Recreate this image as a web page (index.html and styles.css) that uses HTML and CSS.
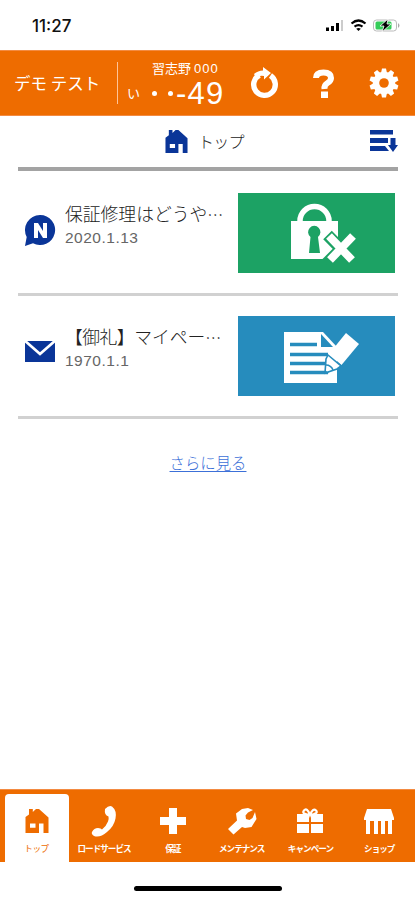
FILE: index.html
```html
<!DOCTYPE html>
<html lang="ja">
<head>
<meta charset="utf-8">
<title>トップ</title>
<link rel="stylesheet" href="styles.css">
</head>
<body>
<svg class="defs" width="0" height="0">
  <symbol id="house" viewBox="0 0 24 26"><path fill-rule="evenodd" d="M4 6.500V1h3.800v3L11 1h3l9.500 8.500V25h-5v-9.500H14V25H.5V9zM5 15.500v4.300h5.500v-4.300z"/></symbol>
</svg>
<div class="screen">
  <div class="status">
    <span class="time">11:27</span>
    <svg class="indicators" width="76" height="16" viewBox="0 0 76 16">
      <path d="M1 9.500h3V13H1zM6 8h3v5H6zM11 5h3v8h-3z"/><path fill="#ccc" d="M16 2h2v11h-2z"/>
      <g fill="none" stroke="#000" stroke-width="2.2"><path d="M26.500 5.500Q33.500-.5 40.500 5.500M29.500 8.700Q33.500 5.500 37.500 8.700"/></g><path d="M31.200 10.800Q33.500 9 35.800 10.800L33.500 13z"/>
      <rect x="48.500" y="2" width="23" height="11" rx="3" fill="#fff" stroke="#bbb"/><rect x="50.500" y="3.500" width="16" height="8" rx="1.500" fill="#35cd59"/>
      <path fill="#aaa" d="M73 5q3 2.500 0 5z"/><path stroke="#fff" stroke-width=".8" d="M63 1l-8 7h4l-2 6 9-8h-4z"/>
    </svg>
  </div>
  <header class="header">
    <span class="user">デモ テスト</span>
    <div class="plate">
      <span class="region">習志野 <span class="code">000</span></span>
      <div class="number"><span class="kana">い</span><i class="dot"></i><i class="dot"></i><span class="digits">-49</span></div>
    </div>
    <svg class="tool" width="30" height="32" viewBox="0 0 30 32"><path fill="none" stroke="#fff" stroke-width="5.400" d="M10.500 8A10.800 10.800 0 1 0 21.500 8.600"/><path fill="#fff" d="M14 0l8 6-7 6.500V9Q10 8 7 11L5 7q4-3.500 9-3.500z"/></svg>
    <svg class="tool" width="30" height="32" viewBox="0 0 30 32"><path fill="none" stroke="#fff" stroke-width="6" d="M7 11Q7 5.500 14.500 5.500T22 11Q22 14 18.500 16T15.500 22"/><path fill="#fff" d="M12 24.500h7V31h-7z"/></svg>
    <svg class="tool" width="30" height="32" viewBox="-15 -16 30 32"><g fill="#fff"><circle r="11.200"/><path id="tooth" d="M-3-10l1-4.500h4l1 4.500v20l-1 4.500h-4l-1-4.500z"/><use href="#tooth" transform="rotate(36)"/><use href="#tooth" transform="rotate(72)"/><use href="#tooth" transform="rotate(108)"/><use href="#tooth" transform="rotate(144)"/></g><circle r="4.800" fill="#ee6c00"/></svg>
  </header>
  <main class="content">
    <div class="heading">
      <svg class="home" width="23" height="25"><use href="#house"/></svg><h1>トップ</h1>
      <svg class="sort" width="28" height="22" viewBox="0 0 28 22"><path d="M0 0h23v4.500H0zM0 8h18v5H0zM0 16h15l4 5H0zM20.500 8h5v7h2.500l-5 7-5-7h2.500z"/></svg>
    </div>
    <article class="item">
      <svg class="mark" width="32" height="34" viewBox="0 0 32 34"><path d="M16 1a15 15 0 1 1-7 28.200L1 32l1.700-9A15 15 0 0 1 16 1z"/><path fill="#fff" d="M10 9h4l5 8V9h4v15h-4l-5-8v8h-4z"/></svg>
      <div class="text"><h2>保証修理はどうや<span class="more">…</span></h2><time>2020.1.13</time></div>
      <div class="thumb green"><svg width="157" height="80" viewBox="0 0 157 80">
        <path fill="none" stroke="#fff" stroke-width="5.500" d="M62 29v-1a14.500 14.500 0 0 1 29 0v1"/>
        <path fill="#fff" d="M53 28h47v38H53z"/><path fill="#1ca264" d="M72.500 44a6.200 6.200 0 1 1 7.500 0l2 16H71z"/>
        <path fill="none" stroke="#1ca264" stroke-width="12" d="M89.500 42l24.500 25M117 42L88 71"/>
        <path fill="none" stroke="#fff" stroke-width="8" d="M91 43l23 24M115 43L92 67"/>
      </svg></div>
    </article>
    <article class="item second">
      <svg class="mark" width="32" height="34" viewBox="0 0 32 34"><path d="M1 7h30v21H1z"/><path fill="none" stroke="#fff" stroke-width="2.800" d="M0 6l16 14L32 6"/></svg>
      <div class="text"><h2><span class="bracket">【御礼】</span>マイペー<span class="more">…</span></h2><time>1970.1.1</time></div>
      <div class="thumb blue"><svg width="157" height="80" viewBox="0 0 157 80">
        <path fill="#fff" d="M46 16h39l14 15v36H46z"/><path fill="none" stroke="#268cbd" stroke-width="3.600" d="M52 28.500h27M52 38.500h38M52 47.500h36M52 56.500h38"/>
        <path fill="#268cbd" d="M83 18l12 13H83z"/>
        <path fill="#fff" d="M108 17l13 11-17.500 21L91 38z"/>
        <path fill="#fff" stroke="#268cbd" stroke-width="1.600" d="M90 39l13 11-4 3-12 4 1-14z"/>
        <path fill="none" stroke="#268cbd" stroke-width="1.600" d="M88 49q5 0 7 5"/><path fill="#268cbd" d="M87 58v-4l4 3z"/>
      </svg></div>
    </article>
    <a class="load" href="#">さらに見る</a>
  </main>
  <nav class="tabs">
    <a class="tab active"><svg width="24" height="26"><use href="#house"/></svg><span>トップ</span></a>
    <a class="tab"><svg width="30" height="34" viewBox="0 0 30 34"><path d="M16 5q4-4 7-2.500 5 4 3.500 12T18 28q-7 6-13 4-3-2-2-4 2-4 6-4 3 0 4 1.500 4-3 6-8 1-3 .5-5Q15 11 16 5z"/></svg><span>ロードサービス</span></a>
    <a class="tab"><svg width="28" height="28" viewBox="0 0 28 28"><path d="M10 1h8v9h9v8h-9v9h-8v-9H1v-8h9z"/></svg><span>保証</span></a>
    <a class="tab"><svg width="30" height="28" viewBox="0 0 30 28"><path d="M9 6.500L15 2l6-1 5 2-5 2.500-2.500 3 .5 3.500 3.500 1 3-2L28 5l1.500 7-5 8-6.500 1-3-1-8.500 7.500L1 22l9-8.500z"/></svg><span>メンテナンス</span></a>
    <a class="tab"><svg width="28" height="26" viewBox="0 0 28 26"><path d="M1 6h12v8H1zM15 6h12v8H15zM1 16h12v9H1zM15 16h12v9H15z"/><path fill="none" stroke="#fff" stroke-width="2.200" d="M14 7Q5 6 8 2.500T14 7Q17-.5 20 2.500T14 7"/></svg><span>キャンペーン</span></a>
    <a class="tab"><svg width="32" height="26" viewBox="0 0 32 26"><path d="M4 1h24l3 9v2h-2v14h-4V13h-3v13h-4V13h-3v13h-4V13h-3v13H8V13H7v13H3V12H1v-2z"/></svg><span>ショップ</span></a>
  </nav>
  <div class="footer"><div class="indicator"></div></div>
</div>
</body>
</html>
```
FILE: styles.css
```css
* { box-sizing: border-box; }
body { margin: 0; background: #fff; color: #555; font-family: "Liberation Sans", "Noto Sans CJK JP", sans-serif; }
h1, h2 { margin: 0; font-weight: 300; }
.defs { display: block; height: 0; }
.screen { width: 415px; height: 900px; display: flex; flex-direction: column; overflow: hidden; }
.status { height: 50px; display: flex; justify-content: space-between; padding: 18px 14px 0 32px; color: #111; }
.time { font: 500 17px/17px Inter, sans-serif; }
.indicators { width: 76px; }
.header { height: 66px; flex: none; display: flex; align-items: center; background: #ee6c00; color: #fff; padding-left: 14px; border-top: 1px solid #f38b42; border-bottom: 1px solid #f38b42; }
.user { width: 103px; flex: none; font: 400 16.5px/24px "Noto Sans CJK JP", sans-serif; white-space: nowrap; }
.plate { width: 124px; flex: none; height: 42px; border-left: 1px solid #ffc397; }
.region { display: block; margin: -3px 0 0 34px; font: 400 13px/18px "Noto Sans CJK JP", sans-serif; white-space: nowrap; }
.code { font-family: "Liberation Sans", sans-serif; letter-spacing: 1px; }
.number { height: 29px; display: flex; align-items: center; padding-left: 9px; }
.kana { width: 25px; font: 400 13px/20px "Noto Sans CJK JP", sans-serif; }
.dot { width: 5px; height: 5px; margin: 2px 11px 0 0; border-radius: 50%; background: #fff; }
.digits { margin: 2px 0 0 -8px; font: 300 31px/29px "Liberation Sans", sans-serif; letter-spacing: 1.2px; }
.tool { flex: none; margin: 0 22px 0 8px; }
.content { height: 673px; flex: none; padding: 0 17px 0 18px; }
.heading { height: 55px; display: flex; align-items: center; border-bottom: 4px solid #a3a3a3; padding: 0 0 1px 147px; }
.heading svg, .mark { fill: #0a3598; }
.heading h1 { margin-left: 10px; font: 300 16px/24px "Noto Sans CJK JP", sans-serif; letter-spacing: -.8px; color: #222; }
.sort { margin-left: auto; }
.item { height: 125px; display: flex; padding: 22px 3px 0 6px; border-bottom: 3px solid #d1d1d1; }
.second { height: 123px; padding-top: 20px; }
.mark { flex: none; margin-top: 21px; }
.second .mark { margin-top: 18px; }
.text { width: 182px; flex: none; padding: 8px 0 0 9px; }
.text h2 { font: 300 17.8px/24px "Noto Sans CJK JP", sans-serif; color: #222; white-space: nowrap; }
.more { font-size: 16px; }
.bracket { letter-spacing: -.5px; }
.text time { display: block; font: 300 15.5px/23px "Liberation Sans", sans-serif; color: #666; letter-spacing: .5px; }
.thumb { flex: none; width: 157px; height: 80px; }
.thumb svg { display: block; }
.green { background: #1ca264; }
.blue { background: #268cbd; }
.load { display: block; margin-top: 31px; text-align: center; font: 300 15.4px/24px "Noto Sans CJK JP", sans-serif; color: #3c70d8; text-underline-offset: 2px; }
.tabs { height: 73px; flex: none; display: grid; grid-template-columns: 64px repeat(5, 68.500px); column-gap: .3px; padding: 4px 0 0 5px; background: #ee6c00; border-top: 1px solid #f38b42; }
.tab { display: grid; grid-template-rows: 54px 14px; place-items: center; fill: #fff; color: #fff; }
.tab svg { display: block; margin-left: 1px; }
.tab span { margin: -14px 0 0 1px; font: 700 8.6px/12px "Noto Sans CJK JP", sans-serif; letter-spacing: -1px; white-space: nowrap; }
.tab.active { background: #fff; color: #ee6c00; fill: #ee6c00; border-radius: 4px 4px 0 0; }
.tab.active svg, .tab.active span { margin-left: -1px; }
.tab.active span { font-weight: 400; letter-spacing: -.5px; }
.footer { height: 38px; padding-top: 24px; }
.indicator { width: 148px; height: 5px; margin: 0 auto; border-radius: 3px; background: #000; }
```
